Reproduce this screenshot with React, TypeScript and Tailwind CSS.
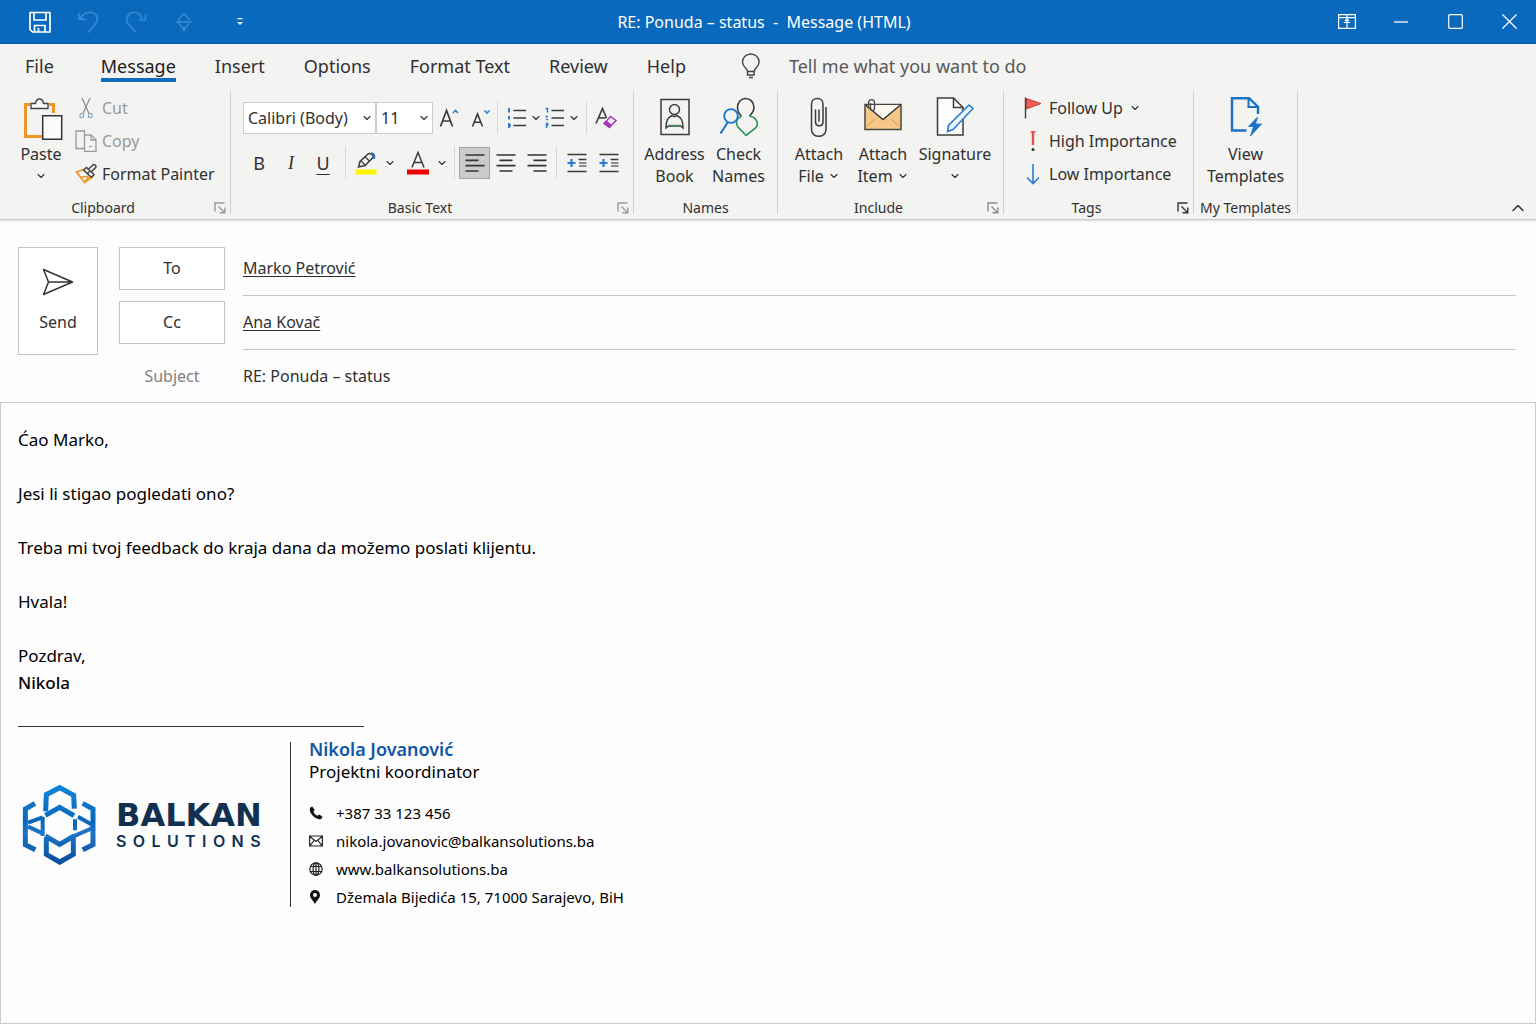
import React from 'react';
import { ChevronDown, ChevronUp } from 'lucide-react';

const Caret: React.FC = () => <ChevronDown size={12} strokeWidth={2.2} className="shrink-0" />;

const Divider: React.FC<{ className?: string }> = ({ className = '' }) => (
  <span className={`w-px h-8 bg-[#d6d6d6] shrink-0 ${className}`} />
);

/* ---------- Title bar icons ---------- */

const SaveIcon = () => (
  <svg width="22" height="22" viewBox="0 0 22 22" fill="none" stroke="currentColor" strokeWidth="1.7" strokeLinejoin="round">
    <path d="M1 1.500h20v19.500H3.500L1 18.500z" />
    <path d="M5 1.500v7.500h12V1.500" />
    <path d="M5.500 21v-6.500h10.500V21M9.500 21v-4" />
  </svg>
);

const UndoIcon = () => (
  <svg width="22" height="22" viewBox="0 0 22 22" fill="none" stroke="currentColor" strokeWidth="1.6">
    <path d="M2 2v6.500h7.500M2 8.500l4-1" />
    <path d="M2.500 8C6 2.500 10 1 14 1.500c6 1 8 6 5 10.500L11 21.500" />
  </svg>
);

const RedoIcon = () => (
  <svg width="22" height="22" viewBox="0 0 22 22" fill="none" stroke="currentColor" strokeWidth="1.6">
    <path d="M20.500 4v4.500c-2 1.500-5 1.500-6.500-.5" />
    <path d="M17 8C16 3.500 12.500 1 9 1.300 3 2 0 7 2.500 12l9 9.500" />
  </svg>
);

const TouchIcon = () => (
  <svg width="18" height="20" viewBox="0 0 18 20" fill="none" stroke="currentColor" strokeWidth="1.400">
    <path d="M1 10h16M4 8.500V7l4-5h2l4 5v1.500M4 11.500l5 7 5-7M4 8v4M9 14v4" />
  </svg>
);

const CustomizeIcon = () => (
  <svg width="6" height="8" viewBox="0 0 6 8" fill="currentColor">
    <path d="M0.500 0h5v1.300h-5zM0 4h6L3 7z" />
  </svg>
);

const RibbonDisplayIcon = () => (
  <svg width="18" height="15" viewBox="0 0 18 15" fill="none" stroke="currentColor" strokeWidth="1.200">
    <path d="M0.600 0.600h16.800v13.800H0.600zM0.600 3.600h16.800M9 1v13M5.800 8.500h6.400M7 7l2-2 2 2" />
  </svg>
);

/* ---------- Ribbon icons ---------- */

const PasteIcon = () => (
  <svg width="40" height="44" viewBox="0 0 40 44" fill="none">
    <path d="M7 7.500H2.500v32H19M26 7.500h4.500V16" stroke="#f0952b" strokeWidth="3" />
    <path d="M8 11.500V6.500h4.500C13 3.500 14.500 2 16.500 2s3.500 1.500 4 4.500H25v5z" fill="#fafafa" stroke="#444" strokeWidth="1.400" />
    <path d="M19.700 18.700h19v23.600h-19z" fill="#fbfbfb" stroke="#333" strokeWidth="1.500" />
  </svg>
);

const CutIcon = () => (
  <svg width="14" height="22" viewBox="0 0 14 22" fill="none">
    <path d="M3 1l7 15.500M11 1L4 16.500" stroke="#8f8f8f" strokeWidth="1.300" />
    <rect x="1" y="16.500" width="3.500" height="4" rx="1" stroke="#7fa6c0" strokeWidth="1.200" />
    <rect x="9.500" y="16.500" width="3.500" height="4" rx="1" stroke="#7fa6c0" strokeWidth="1.200" />
  </svg>
);

const CopyIcon = () => (
  <svg width="22" height="22" viewBox="0 0 22 22" fill="none" stroke="#9a9a9a" strokeWidth="1.300">
    <path d="M9 18.500H1V1h8.500v3.500" />
    <path d="M9.500 5h6.500l5 5v11.300H9.500z" />
    <path d="M16 5v5h5M14 17l3-1" />
  </svg>
);

const PainterIcon = () => (
  <svg width="22" height="22" viewBox="0 0 22 22" fill="none">
    <path d="M9 6.500L1.500 9l8 10.500 8-6" stroke="#f0952b" strokeWidth="1.800" />
    <path d="M5 14l8.500-.5M9 19l5-5" stroke="#f0952b" strokeWidth="1.300" />
    <path d="M8.500 7l3-2.500 7.500 7-2.500 3zM12.500 10.500l2-2" stroke="#444" strokeWidth="1.500" />
    <path d="M13.500 6l4-3.500c1-1.500 3.500-1 3.500 1 0 .8-.3 1.200-1 1.700l-3.700 3.500" stroke="#444" strokeWidth="1.500" />
  </svg>
);

const GrowFontIcon = () => (
  <svg width="20" height="20" viewBox="0 0 20 20" fill="none">
    <path d="M1.500 18.500L7.500 2.500l6 16M3.500 13h8" stroke="#3b3b3b" strokeWidth="1.700" />
    <path d="M14 5L16.500 2.500 19 5" stroke="#2f7fc4" strokeWidth="1.600" />
  </svg>
);

const ShrinkFontIcon = () => (
  <svg width="20" height="20" viewBox="0 0 20 20" fill="none">
    <path d="M1.500 18.500L6.500 6l5 12.500M3.200 14.200h6.600" stroke="#3b3b3b" strokeWidth="1.600" />
    <path d="M13.500 2.500L16 5 18.500 2.500" stroke="#2f7fc4" strokeWidth="1.600" />
  </svg>
);

const BulletsIcon = () => (
  <svg width="20" height="22" viewBox="0 0 20 22" fill="none">
    <path d="M6.500 3.500h12.500M6.500 11h12.500M6.500 18.500h12.500" stroke="#3b3b3b" strokeWidth="1.700" />
    <path d="M2 1v4.500M2 9v3.500M2 16v5M3 17.500v2" stroke="#2b7cd3" strokeWidth="2" />
  </svg>
);

const NumberingIcon = () => (
  <svg width="20" height="22" viewBox="0 0 20 22" fill="none">
    <path d="M6.500 3.500h12.500M6.500 11h12.500M6.500 18.500h12.500" stroke="#3b3b3b" strokeWidth="1.700" />
    <path d="M0.500 1.500h2v4M0.500 9.500h2.500M1 12.500h2M0.800 16.500h2.500M1.500 21v-3h2" stroke="#2b7cd3" strokeWidth="1.500" />
  </svg>
);

const ClearFormatIcon = () => (
  <svg width="22" height="22" viewBox="0 0 22 22" fill="none">
    <path d="M1 16.500L7.500 1.500l4 9.500M3.500 11h7" stroke="#3b3b3b" strokeWidth="1.600" />
    <path d="M9 16.500l6.500-7 5.500 4-6.500 7z" fill="#f6e8f8" stroke="#a03fae" strokeWidth="1.500" />
    <path d="M9 16.500l2.500-2.500 5 4-2 2.500z" fill="#a03fae" stroke="#a03fae" />
  </svg>
);

const HighlightIcon = () => (
  <svg width="22" height="24" viewBox="0 0 22 24" fill="none">
    <path d="M0.500 18.500h21V23.500h-21z" fill="#fff200" />
    <path d="M3.500 16l1.500-5.500 8-7.500c2-1.500 5 .5 5.500 3L10 14.500 3.500 16z" stroke="#3b3b3b" strokeWidth="1.500" fill="#f4f4f4" />
    <path d="M6 10l4.500 4.500M10 6l4.500 4" stroke="#3b3b3b" strokeWidth="1.200" />
    <path d="M16 2.200c2.500 0 3.500 1 3.200 5.800" stroke="#2b6fc0" strokeWidth="2" />
  </svg>
);

const FontColorIcon = () => (
  <svg width="22" height="24" viewBox="0 0 22 24" fill="none">
    <path d="M0 18.500h22V23.500H0z" fill="#f00000" />
    <path d="M5 16.500L11 1.500l6 15M7 11.500h8" stroke="#3b3b3b" strokeWidth="1.500" />
  </svg>
);

const AlignIcon: React.FC<{ d: string }> = ({ d }) => (
  <svg width="20" height="20" viewBox="0 0 20 20" fill="none" stroke="#333" strokeWidth="1.700">
    <path d={d} />
  </svg>
);

const IndentIcon = () => (
  <svg width="20" height="20" viewBox="0 0 20 20" fill="none">
    <path d="M0.500 1.500h19M0.500 18.500h19M11.500 6.500h8" stroke="#3b3b3b" strokeWidth="1.700" />
    <path d="M12 10h7.500M12 13h7.500" stroke="#6b6b6b" strokeWidth="1.500" />
    <path d="M0.500 10h8M4.500 6v8" stroke="#2b7cd3" strokeWidth="2.200" />
  </svg>
);

const AddressBookIcon = () => (
  <svg width="30" height="40" viewBox="0 0 30 40" fill="none" stroke="#3b3b3b" strokeWidth="1.500">
    <path d="M1 2.500h28v35H1z" />
    <circle cx="14.500" cy="12.500" r="5" />
    <path d="M6 31c0-8 2-10.500 6-12.500l2.500 1.200 2.500-1.200c4 2 6 4.500 6 12.500l-2.500-2H8.500z" />
    <path d="M8.500 28.500h12" stroke="#3f8f63" />
  </svg>
);

const CheckNamesIcon = () => (
  <svg width="40" height="40" viewBox="0 0 40 40" fill="none" strokeWidth="1.600">
    <path d="M22.500 19c-3-2.500-4-5-4-8.500C18.500 5 22 1.500 26.500 1.500s8.500 3.500 8.500 9c0 4-2 6-4.500 8.500" stroke="#3b3b3b" />
    <path d="M22.500 19c-3 1.500-5 4-5 6.500 0 1.500.5 3 1.500 4.500l8 8.500 9-7c3-2.500 3-6.500.5-9.500-1.500-2-3.500-2.500-6-3" stroke="#23914f" />
    <circle cx="12" cy="19" r="6.800" stroke="#1873cc" strokeWidth="1.800" />
    <path d="M9 25L1.500 36.500" stroke="#1873cc" strokeWidth="2" />
  </svg>
);

const AttachFileIcon = () => (
  <svg width="18" height="42" viewBox="0 0 18 42" fill="none" stroke="#3b3b3b" strokeWidth="1.500">
    <path d="M13 10.500V26c0 5-7.500 5-7.500 0V13.500M13 10.500V8c0-7.500-11.500-7.500-11.500 0v25.500c0 9 14.500 9 14.500 0V11" />
    <path d="M9 13.500v12" />
  </svg>
);

const AttachItemIcon = () => (
  <svg width="38" height="38" viewBox="0 0 38 38" fill="none">
    <path d="M1 6.500h36V31.500H1z" fill="#f5c888" stroke="#4a4540" strokeWidth="1.500" />
    <path d="M2 7l17 14.500L36.500 7z" fill="#fdf8f0" />
    <path d="M1.500 7L19 21.500 36.500 7" stroke="#3b3b3b" strokeWidth="1.600" />
    <path d="M3 28l8-7M35 28l-8-7" stroke="#dca65c" strokeWidth="1.200" />
    <path d="M4.500 10.500V5c0-4.500 6-4.500 6 0v5c0 3.500-4 3.500-4 0V5" stroke="#4a4a4a" strokeWidth="1.300" />
  </svg>
);

const SignatureIcon = () => (
  <svg width="38" height="40" viewBox="0 0 38 40" fill="none">
    <path d="M1.500 1h16l9.500 9.500v27.500H1.500z" fill="#fcfcfc" stroke="#3b3b3b" strokeWidth="1.500" />
    <path d="M17.500 1v9.500h9.500" stroke="#3b3b3b" strokeWidth="1.500" />
    <path d="M33 8l4 3.500L17 32.500 11.500 34.500l1-6z" fill="#eef6fd" stroke="#2b7cd3" strokeWidth="1.600" />
  </svg>
);

const FlagIcon = () => (
  <svg width="18" height="22" viewBox="0 0 18 22" fill="none">
    <path d="M2 1.500L17 6.500 2 12z" fill="#f0605a" stroke="#c8342f" strokeWidth="1" />
    <path d="M1.500 0.500v21" stroke="#3b3b3b" strokeWidth="1.400" />
  </svg>
);

const HighIcon = () => (
  <svg width="18" height="22" viewBox="0 0 18 22" fill="none">
    <path d="M6.500 1h5v1.500h-1.300V15H7.800V2.500H6.500z" fill="#e8504a" />
    <circle cx="9" cy="19.500" r="1.500" fill="#333" />
  </svg>
);

const LowIcon = () => (
  <svg width="18" height="22" viewBox="0 0 18 22" fill="none" stroke="#2b7cd3" strokeWidth="1.600">
    <path d="M9 1v19.500M3 14.500l6 6 6-6" />
  </svg>
);

const TemplatesIcon = () => (
  <svg width="34" height="40" viewBox="0 0 34 40" fill="none" stroke="#1a72c7">
    <path d="M17.500 33.500H3V1.200h17l9 8.500V17" strokeWidth="2.400" />
    <path d="M19.500 1v9H29" strokeWidth="2" />
    <path d="M28 20.500l-8.500 9h5l-3 9.500 11-12h-6l2-6.500z" fill="#1a72c7" strokeWidth="0.800" />
  </svg>
);

const BulbIcon = () => (
  <svg width="20" height="26" viewBox="0 0 20 26" fill="none" stroke="#444" strokeWidth="1.400">
    <path d="M6.500 18.500c0-3-5-4.500-5-9.500a8.300 8 0 0 1 16.600 0c0 5-5 6.500-5 9.500z" />
    <path d="M6.500 18.500v3.500h6.600v-3.500M8 24.500h4" />
  </svg>
);

const LauncherIcon = () => (
  <svg width="12" height="12" viewBox="0 0 12 12" fill="none" stroke="currentColor" strokeWidth="1.400">
    <path d="M1 9.500V1h9.500M4.500 4.500l6 6M10.800 5.500v5.300H5.500" />
  </svg>
);

const SendIcon = () => (
  <svg width="32" height="28" viewBox="0 0 32 28" fill="none" stroke="#333" strokeWidth="1.500" strokeLinejoin="round">
    <path d="M1.500 1.500L30.500 14 1.500 26.500 6.500 14zM6.500 14h24" />
  </svg>
);

/* ---------- Signature icons ---------- */

const PhoneIcon = () => (
  <svg width="14" height="14" viewBox="0 0 14 14" fill="#111">
    <path d="M3.300.6L1 1.800C.2 4.500 1.600 7.700 4 10s5.500 3.700 8.200 3l1.300-2.200-3.200-2.300-1.900 1.300C6.600 9 5.200 7.500 4.400 5.700l1.300-1.800z" />
  </svg>
);

const MailIcon = () => (
  <svg width="14" height="12" viewBox="0 0 14 12" fill="none" stroke="#222" strokeWidth="1.200">
    <path d="M.6 1h12.800v10H.6zM.6 1.300L7 6.500l6.400-5.200M1 10.700L5 5.500M13 10.700L9 5.500" />
  </svg>
);

const GlobeIcon = () => (
  <svg width="14" height="14" viewBox="0 0 14 14" fill="none" stroke="#222" strokeWidth="1.200">
    <circle cx="7" cy="7" r="6.200" />
    <ellipse cx="7" cy="7" rx="2.900" ry="6.200" />
    <path d="M1.500 4.500h11M1.500 9.500h11M7 .8v12.400" />
  </svg>
);

const PinIcon = () => (
  <svg width="12" height="14" viewBox="0 0 12 14" fill="#111">
    <path fillRule="evenodd" d="M6 0a5 5 0 0 0-5 5c0 3.300 3.500 6 5 9 1.500-3 5-5.700 5-9a5 5 0 0 0-5-5zm0 3a2 2 0 1 1 0 4 2 2 0 0 1 0-4z" />
  </svg>
);

const BalkanLogo = () => (
  <svg width="76" height="82" viewBox="66 206 228 246" fill="none" stroke="url(#balkan)" strokeWidth="15">
    <defs>
      <linearGradient id="balkan" gradientUnits="userSpaceOnUse" x1="0" y1="209" x2="0" y2="450">
        <stop offset="0" stopColor="#0d86dc" />
        <stop offset="0.450" stopColor="#0b67bb" />
        <stop offset="0.600" stopColor="#1c74c6" />
        <stop offset="1" stopColor="#0a4a98" />
      </linearGradient>
    </defs>
    <path d="M137 288L139 238 179 217 221 240 223 280" />
    <path d="M136 300L179 276 222 301" />
    <path d="M105 264L76 281V388L106 403" />
    <path d="M248 264L279 281V388L248 403" />
    <path d="M128 304V362M84 322L128 306M84 334L128 354" strokeWidth="12" />
    <path d="M225 345V312M234 304L276 328M218 364L278 338" strokeWidth="12" />
    <path d="M139 366V417L179 440 220 417V366" />
    <path d="M136 362L179 387 222 362" />
  </svg>
);

/* ---------- Ribbon parts ---------- */

interface GroupProps {
  label: string;
  width: string;
  launcher?: string;
  children: React.ReactNode;
}

const Group: React.FC<GroupProps> = ({ label, width, launcher, children }) => (
  <section aria-label={label} className={`flex flex-col shrink-0 border-r border-[#cfcfcf] ${width}`}>
    <div className="flex-1">{children}</div>
    <div className="flex items-center h-3">
      <span className="flex-1 text-center text-sm leading-3 whitespace-nowrap">{label}</span>
      {launcher && (
        <button aria-label={`${label} settings`} className={`w-6 pr-1 flex justify-end ${launcher}`}>
          <LauncherIcon />
        </button>
      )}
    </div>
  </section>
);

interface BigButtonProps {
  icon: React.ReactNode;
  lines: string[];
  caret?: boolean;
  width: string;
}

const BigButton: React.FC<BigButtonProps> = ({ icon, lines, caret, width }) => (
  <button className={`flex flex-col items-center shrink-0 whitespace-nowrap text-base leading-[22px] ${width}`}>
    <span className="h-[52px] flex items-center justify-center">{icon}</span>
    <span>{lines[0]}</span>
    <span className="flex items-center justify-center gap-1 h-[22px]">
      {lines[1]}
      {caret && <Caret />}
    </span>
  </button>
);

const SmallButton: React.FC<{ icon: React.ReactNode; label: string; caret?: boolean; muted?: boolean }> = ({ icon, label, caret, muted }) => (
  <button className={`flex items-center gap-1 h-[33px] text-base whitespace-nowrap ${muted ? 'text-[#999]' : ''}`}>
    <span className="w-6 flex justify-center shrink-0">{icon}</span>
    {label}
    {caret && <span className="ml-0.5"><Caret /></span>}
  </button>
);

const Tool: React.FC<{ label: string; width?: string; active?: boolean; children: React.ReactNode }> = ({ label, width = 'w-8', active, children }) => (
  <button
    aria-label={label}
    className={`h-8 flex items-center justify-center shrink-0 text-lg ${width} ${active ? 'bg-[#cbcbcb] border border-[#a3a3a3]' : ''}`}
  >
    {children}
  </button>
);

const Picker: React.FC<{ label: string; value: string; width: string }> = ({ label, value, width }) => (
  <label className={`grid items-center h-8 bg-white border border-[#cdcdcd] shrink-0 ${width}`}>
    <select aria-label={label} className="appearance-none outline-none bg-transparent w-full pl-1 text-base col-start-1 row-start-1">
      <option>{value}</option>
    </select>
    <span className="col-start-1 row-start-1 justify-self-end pr-0.5 pointer-events-none"><Caret /></span>
  </label>
);

const tabs = ['Insert', 'Options', 'Format Text', 'Review', 'Help'];

const contacts = [
  { icon: <PhoneIcon />, text: '+387 33 123 456', href: 'tel:+38733123456' },
  { icon: <MailIcon />, text: 'nikola.jovanovic@balkansolutions.ba', href: 'mailto:nikola.jovanovic@balkansolutions.ba' },
  { icon: <GlobeIcon />, text: 'www.balkansolutions.ba', href: '#website' },
];

const App: React.FC = () => {
  return (
    <div className="min-h-screen flex flex-col bg-[#fdfdfd] text-[#303030] font-['Noto_Sans','Open_Sans',sans-serif]">
      {/* Title bar */}
      <header className="h-11 bg-[#0969bd] text-white flex items-center shrink-0 border-b border-[#0a5ca8]">
        <div className="flex-1 flex items-center pl-4">
          <button aria-label="Save" className="w-12 flex justify-center"><SaveIcon /></button>
          <button aria-label="Undo" className="w-12 flex justify-center text-[#3d8bd0]"><UndoIcon /></button>
          <button aria-label="Redo" className="w-12 flex justify-center text-[#3d8bd0]"><RedoIcon /></button>
          <button aria-label="Touch mode" className="w-12 flex justify-center text-[#3d8bd0]"><TouchIcon /></button>
          <button aria-label="Customize toolbar" className="w-16 flex justify-center"><CustomizeIcon /></button>
        </div>
        <h1 className="text-base whitespace-pre pr-6">RE: Ponuda – status  -  Message (HTML)</h1>
        <div className="flex-1 flex items-center justify-end">
          <button aria-label="Ribbon display options" className="w-[54px] flex justify-center"><RibbonDisplayIcon /></button>
          <button aria-label="Minimize" className="w-[54px] flex justify-center">
            <svg width="14" height="14" viewBox="0 0 14 14" stroke="currentColor" strokeWidth="1.300"><path d="M0 7h14" /></svg>
          </button>
          <button aria-label="Maximize" className="w-[54px] flex justify-center">
            <svg width="15" height="15" viewBox="0 0 15 15" fill="none" stroke="currentColor" strokeWidth="1.200"><rect x="0.700" y="0.700" width="13.600" height="13.600" rx="1" /></svg>
          </button>
          <button aria-label="Close" className="w-[54px] flex justify-center">
            <svg width="15" height="15" viewBox="0 0 15 15" stroke="currentColor" strokeWidth="1.300"><path d="M0.500 0.500l14 14M14.500 0.500l-14 14" /></svg>
          </button>
        </div>
      </header>

      {/* Ribbon */}
      <div className="bg-[#f3f3f2] border-b border-[#cccccc] shadow-sm shrink-0">
        <nav className="h-11 flex items-center gap-[39px] pl-[25px] text-lg leading-6 whitespace-nowrap">
          <a href="#file" className="mr-2">File</a>
          <a href="#message" className="relative text-[#1c1c1c]">
            Message
            <span className="absolute inset-x-0 top-full h-1 bg-[#0f6cbd]" />
          </a>
          {tabs.map((tab) => (
            <a key={tab} href={`#${tab}`}>{tab}</a>
          ))}
          <label className="flex items-center gap-7 ml-4 text-[#595959]">
            <BulbIcon />
            <input
              type="text"
              aria-label="Tell me what you want to do"
              placeholder="Tell me what you want to do"
              className="w-72 bg-transparent outline-none placeholder:text-[#595959]"
            />
          </label>
        </nav>

        <div className="flex mt-[3px] h-[123px] mb-[5px]">
          <Group label="Clipboard" width="w-[231px]" launcher="text-[#9a9a9a]">
            <div className="flex">
              <button className="w-[74px] pl-2 flex flex-col items-center text-base leading-[22px]">
                <span className="h-[52px] pl-1 pt-1 flex items-center"><PasteIcon /></span>
                Paste
                <span className="h-[22px] flex items-center"><Caret /></span>
              </button>
              <div>
                <SmallButton icon={<CutIcon />} label="Cut" muted />
                <SmallButton icon={<CopyIcon />} label="Copy" muted />
                <SmallButton icon={<PainterIcon />} label="Format Painter" />
              </div>
            </div>
          </Group>

          <Group label="Basic Text" width="w-[403px]" launcher="text-[#9a9a9a]">
            <div className="flex items-center pl-3 pt-[11px]">
              <Picker label="Font" value="Calibri (Body)" width="w-[133px]" />
              <Picker label="Font size" value="11" width="w-[57px]" />
              <Tool label="Increase font size"><GrowFontIcon /></Tool>
              <Tool label="Decrease font size"><ShrinkFontIcon /></Tool>
              <Divider className="mr-1.5" />
              <Tool label="Bullets" width="w-[26px]"><BulletsIcon /></Tool>
              <Caret />
              <Tool label="Numbering" width="w-[26px]"><NumberingIcon /></Tool>
              <Caret />
              <Divider className="mx-1.5" />
              <Tool label="Clear formatting" width="w-[26px]"><ClearFormatIcon /></Tool>
            </div>
            <div className="flex items-center pl-3 pt-[13px]">
              <Tool label="Bold"><span>B</span></Tool>
              <Tool label="Italic"><span className="italic font-['Liberation_Serif',serif]">I</span></Tool>
              <Tool label="Underline"><span className="underline underline-offset-4">U</span></Tool>
              <Divider className="mx-1.5" />
              <Tool label="Highlight" width="w-7"><HighlightIcon /></Tool>
              <Tool label="Highlight colors" width="w-5"><Caret /></Tool>
              <Tool label="Font color" width="w-9"><FontColorIcon /></Tool>
              <Caret />
              <Divider className="ml-1.5 mr-1" />
              <Tool label="Align left" width="w-[31px]" active><AlignIcon d="M0.500 2h19M0.500 7.300h13M0.500 12.700h19M0.500 18h13" /></Tool>
              <Tool label="Center" width="w-[31px]"><AlignIcon d="M0.500 2h19M3.500 7.300h13M0.500 12.700h19M3.500 18h13" /></Tool>
              <Tool label="Align right" width="w-[31px]"><AlignIcon d="M0.500 2h19M6.500 7.300h13M0.500 12.700h19M6.500 18h13" /></Tool>
              <Divider className="mx-1" />
              <Tool label="Decrease indent"><IndentIcon /></Tool>
              <Tool label="Increase indent"><IndentIcon /></Tool>
            </div>
          </Group>

          <Group label="Names" width="w-36">
            <div className="flex justify-center pl-0.5">
              <BigButton icon={<AddressBookIcon />} lines={['Address', 'Book']} width="w-16" />
              <BigButton icon={<CheckNamesIcon />} lines={['Check', 'Names']} width="w-16" />
            </div>
          </Group>

          <Group label="Include" width="w-[226px]" launcher="text-[#8a8a8a]">
            <div className="flex pl-[9px]">
              <BigButton icon={<AttachFileIcon />} lines={['Attach', 'File']} caret width="w-16" />
              <BigButton icon={<AttachItemIcon />} lines={['Attach', 'Item']} caret width="w-16" />
              <BigButton icon={<SignatureIcon />} lines={['Signature', '']} caret width="w-20" />
            </div>
          </Group>

          <Group label="Tags" width="w-[190px]" launcher="text-[#333]">
            <div className="pl-[17px]">
              <SmallButton icon={<FlagIcon />} label="Follow Up" caret />
              <SmallButton icon={<HighIcon />} label="High Importance" />
              <SmallButton icon={<LowIcon />} label="Low Importance" />
            </div>
          </Group>

          <Group label="My Templates" width="w-[104px]">
            <BigButton icon={<TemplatesIcon />} lines={['View', 'Templates']} width="w-full" />
          </Group>

          <button aria-label="Collapse ribbon" className="ml-auto self-end mr-2 -mb-1"><ChevronUp size={20} strokeWidth={1.8} /></button>
        </div>
      </div>

      {/* Recipients */}
      <div className="flex gap-[21px] pl-[18px] pr-5 pt-[27px] pb-1.5 text-base shrink-0">
        <button className="w-20 h-[108px] shrink-0 border border-[#c4c4c4] flex flex-col items-center justify-center gap-3.5 bg-white">
          <SendIcon />
          Send
        </button>
        <div className="flex-1">
          <div className="flex gap-[18px] h-[54px]">
            <button className="w-[106px] h-[43px] pb-0.5 border border-[#c4c4c4] bg-white">To</button>
            <div className="flex-1 h-[49px] pb-1.5 border-b border-[#c4c4c4] flex items-center">
              <a href="#marko" className="underline underline-offset-2">Marko Petrović</a>
            </div>
          </div>
          <div className="flex gap-[18px] h-[54px]">
            <button className="w-[106px] h-[43px] pb-0.5 border border-[#c4c4c4] bg-white">Cc</button>
            <div className="flex-1 h-[49px] pb-1.5 border-b border-[#c4c4c4] flex items-center">
              <a href="#ana" className="underline underline-offset-2">Ana Kovač</a>
            </div>
          </div>
          <div className="flex gap-[18px] h-[41px] items-center">
            <label htmlFor="subject" className="w-[106px] text-center text-[#808080]">Subject</label>
            <input id="subject" type="text" defaultValue="RE: Ponuda – status" className="flex-1 bg-transparent outline-none" />
          </div>
        </div>
      </div>

      {/* Message body */}
      <main className="flex-1 border border-[#cccccc] px-[17px] pt-[23px] text-[17px] leading-[27px] text-black">
        <p>Ćao Marko,</p>
        <p className="mt-[27px]">Jesi li stigao pogledati ono?</p>
        <p className="mt-[27px]">Treba mi tvoj feedback do kraja dana da možemo poslati klijentu.</p>
        <p className="mt-[27px]">Hvala!</p>
        <p className="mt-[27px]">Pozdrav,</p>
        <p className="font-medium">Nikola</p>

        <hr className="w-[346px] mt-[30px] border-[#333]" />
        <div className="flex items-start mt-[15px]">
          <div className="flex items-center gap-[18px] w-[273px] h-[165px] pl-1 border-r border-[#333]">
            <BalkanLogo />
            <div className="text-[#12304f]">
              <div className="text-[32px] leading-8 font-bold font-['DejaVu_Sans',sans-serif]">BALKAN</div>
              <div className="text-base leading-5 font-semibold tracking-[0.4em] font-['Inter',sans-serif]">SOLUTIONS</div>
            </div>
          </div>
          <div className="pl-[18px]">
            <div className="text-lg leading-[22px] font-semibold text-[#0f56a6] -mt-1">Nikola Jovanović</div>
            <div className="text-[17px] leading-6">Projektni koordinator</div>
            <address className="not-italic text-[15px] mt-[15px]">
              {contacts.map((c) => (
                <a key={c.text} href={c.href} className="flex items-center h-7">
                  <span className="w-[27px]">{c.icon}</span>
                  {c.text}
                </a>
              ))}
              <span className="flex items-center h-7">
                <span className="w-[27px]"><PinIcon /></span>
                Džemala Bijedića 15, 71000 Sarajevo, BiH
              </span>
            </address>
          </div>
        </div>
      </main>
    </div>
  );
};

export default App;
